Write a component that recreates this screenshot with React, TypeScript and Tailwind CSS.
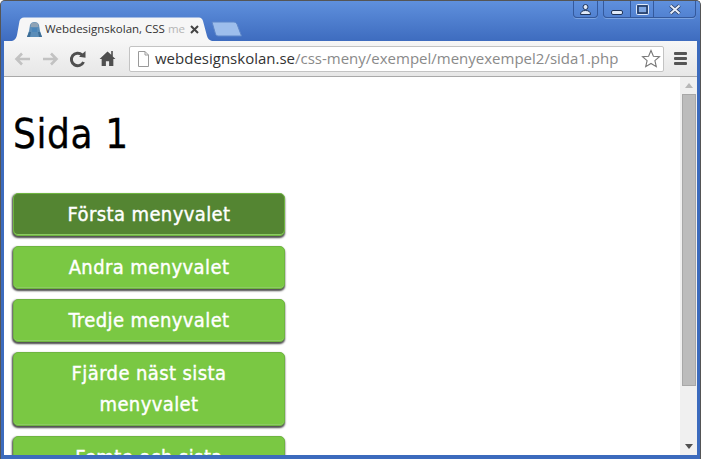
import React from 'react';

const items = ['Första menyvalet', 'Andra menyvalet', 'Tredje menyvalet', 'Fjärde näst sista menyvalet', 'Femte och sista menyvalet'];

const Favicon = () => (
  <svg width="17" height="17" viewBox="0 0 17 17" className="shrink-0">
    <path d="M1 16 L3 10 L4 4 Q5 1 8.500 1 Q12 1 13 4 L14 10 L16 16 Z" fill="#5b8db8" />
    <path d="M5 2.500 Q8.500 0.500 12 2.500 L12.500 6 H4.500 Z" fill="#8fa3b5" />
    <path d="M1 16 L3 11 H5 L4 16 Z M16 16 L14 11 H12 L13 16 Z" fill="#3c6d96" />
    <path d="M6 7 H11 V11 H6 Z" fill="#4a86ba" />
  </svg>
);

const NavIcons = () => (
  <div className="flex items-center w-[125px] pl-[8px] shrink-0">
    <svg width="20" height="20" viewBox="0 0 20 20">
      <path d="M18 10 H5 M10 4.500 L4.500 10 L10 15.500" fill="none" stroke="#c2c2c2" strokeWidth="2.600" />
    </svg>
    <svg width="20" height="20" viewBox="0 0 20 20" className="ml-[9px]">
      <path d="M2 10 H15 M10 4.500 L15.500 10 L10 15.500" fill="none" stroke="#c2c2c2" strokeWidth="2.600" />
    </svg>
    <svg width="18" height="18" viewBox="0 0 18 18" className="ml-[8px]">
      <path d="M14.500 12 A6.300 6.300 0 1 1 13 4.800" fill="none" stroke="#4f4f4f" strokeWidth="3" />
      <path d="M10 6.800 L16.500 7.800 L16.500 1 Z" fill="#4f4f4f" />
    </svg>
    <svg width="17" height="17" viewBox="0 0 16 16" className="ml-[12px]">
      <path d="M8 1.500 L0.500 8.500 H2.500 V15 H6.500 V10.500 H9.500 V15 H13.500 V8.500 H15.500 L13 6 V1 H11.500 V4.500 Z" fill="#4f4f4f" />
    </svg>
  </div>
);

export default function App() {
  return (
    <div className="w-[701px] h-[459px] overflow-hidden flex flex-col bg-[#3c6bbd] rounded-t-[5px] border-t border-x border-[#555] font-['Open_Sans',sans-serif]">
      {/* title bar */}
      <div className="h-[40px] shrink-0 flex justify-between bg-gradient-to-b from-[#5f90dd] to-[#3e6cbf] pl-[11px] pr-[4px]">
        <div className="flex items-end">
          <div className="relative w-[200px] h-[24px] flex items-center pl-[14px]">
            <svg width="200" height="24" viewBox="0 0 200 24" className="absolute inset-0">
              <path d="M0 24 Q4 23 5 18 L7.500 4 Q8.500 0.500 12 0.500 H187 Q190 0.500 191 4 L195 19 Q196 23 200 24 Z" fill="#f6f6f6" />
            </svg>
            <div className="relative flex items-center">
              <Favicon />
              <span className="ml-[2px] w-[137px] whitespace-nowrap text-[11.500px] text-[#333] leading-[16px] bg-clip-text">
                Webdesignskolan, CSS <span className="text-[#b5b5b5]">me</span>
              </span>
              <svg width="9" height="9" viewBox="0 0 9 9" className="ml-[8px]">
                <path d="M1 1 L8 8 M8 1 L1 8" stroke="#444" strokeWidth="2" />
              </svg>
            </div>
          </div>
          <svg width="32" height="16" viewBox="0 0 32 16" className="mb-[4px] ml-[-1px]">
            <path d="M1 1 H23 Q25 1 26 3 L30.500 15 H7 Q5 15 4.500 13 Z" fill="#9dbeec" stroke="#5d86c8" />
          </svg>
        </div>
        <div className="flex items-start gap-[5px]">
          <div className="w-[25px] h-[17px] rounded-b-[4px] border border-t-0 border-[#34599c] flex items-center justify-center shadow-[0_1px_0_#7ba3e0]">
            <svg width="13" height="11" viewBox="0 0 13 11">
              <circle cx="6.500" cy="3" r="2.500" fill="#dfe9f8" stroke="#1f3358" strokeWidth="1" />
              <path d="M1.500 10.500 Q1.500 6.500 6.500 6.500 Q11.500 6.500 11.500 10.500 Z" fill="#dfe9f8" stroke="#1f3358" strokeWidth="1" />
            </svg>
          </div>
          <div className="w-[93px] h-[17px] rounded-b-[4px] border border-t-0 border-[#34599c] flex shadow-[0_1px_0_#7ba3e0]">
            <div className="w-[27px] flex items-end justify-center pb-[2px] border-r border-[#34599c]">
              <div className="w-[12px] h-[5px] bg-[#dfe9f8] border border-[#1f3358] rounded-[2px]" />
            </div>
            <div className="w-[23px] flex items-center justify-center border-r border-[#34599c]">
              <svg width="13" height="11" viewBox="0 0 13 11">
                <rect x="0.500" y="0.500" width="12" height="10" rx="1" fill="none" stroke="#dfe9f8" />
                <rect x="2" y="2" width="9" height="7" fill="#7ea6e2" stroke="#1f3358" strokeWidth="1.500" />
              </svg>
            </div>
            <div className="flex-1 flex items-center justify-center">
              <svg width="14" height="11" viewBox="0 0 14 11">
                <path d="M2.500 1.500 L11.500 9.500 M11.500 1.500 L2.500 9.500" stroke="#26385c" strokeWidth="3.600" />
                <path d="M2.500 1.500 L11.500 9.500 M11.500 1.500 L2.500 9.500" stroke="#e6edf9" strokeWidth="2" />
              </svg>
            </div>
          </div>
        </div>
      </div>

      <div className="flex-1 min-h-0 flex flex-col mx-[3px] mb-[4px] bg-white">
        {/* toolbar */}
        <div className="h-[36px] shrink-0 flex items-center bg-gradient-to-b from-[#f6f6f6] to-[#e7e7e7] border-b border-[#a9a9a9]">
          <NavIcons />
          <div className="w-[535px] h-[26px] shrink-0 flex items-center bg-white border border-[#c3c3c3] rounded-[2px] pl-[7px] pr-[2px]">
            <svg width="13" height="16" viewBox="0 0 13 16" className="shrink-0">
              <path d="M1.500 0.500 H8 L11.500 4 V15.500 H1.500 Z M8 0.500 V4 H11.500" fill="#fff" stroke="#9a9a9a" />
            </svg>
            <span className="ml-[5px] flex-1 text-[15px] leading-none whitespace-nowrap text-[#8a8a8a]">
              <span className="text-[#333]">webdesignskolan.se</span>/css-meny/exempel/menyexempel2/sida1.php
            </span>
            <svg width="20" height="19" viewBox="0 0 20 19" className="shrink-0">
              <path d="M10 1.500 L12.400 7.200 L18.500 7.700 L13.900 11.700 L15.300 17.700 L10 14.500 L4.700 17.700 L6.100 11.700 L1.500 7.700 L7.600 7.200 Z" fill="#fff" stroke="#777" strokeWidth="1.100" />
            </svg>
          </div>
          <div className="flex-1 flex flex-col items-center gap-[2px]">
            <div className="w-[13px] h-[3px] bg-[#555] rounded-[1px]" />
            <div className="w-[13px] h-[3px] bg-[#555] rounded-[1px]" />
            <div className="w-[13px] h-[3px] bg-[#555] rounded-[1px]" />
          </div>
        </div>

        <div className="flex-1 min-h-0 flex">
          {/* page */}
          <div className="flex-1 overflow-hidden px-[9px] font-['DejaVu_Sans_Condensed','DejaVu_Sans',sans-serif] [font-stretch:condensed]">
            <h1 className="text-[40px] leading-[48px] text-black mt-[33px] mb-[35px] tracking-[0.6px] [-webkit-text-stroke:0.3px_black]">Sida 1</h1>
            <ul className="w-[272px] flex flex-col gap-[10px]">
              {items.map((item, i) => (
                <li
                  key={item}
                  className={`rounded-[5px] border border-[#6fb540] px-[10px] py-[5px] text-center text-[20px] leading-[31px] tracking-[0.4px] text-white [-webkit-text-stroke:0.4px_white] shadow-[inset_0_-1px_0_#8ccb63,-1px_1px_2px_#555,0_2px_2px_#555] ${i === 0 ? 'bg-[#548532]' : 'bg-[#7ac843]'}`}
                >
                  {item}
                </li>
              ))}
            </ul>
          </div>
          {/* scrollbar */}
          <div className="w-[17px] shrink-0 flex flex-col items-center bg-[#f0f0f0]">
            <div className="h-[17px] flex items-center justify-center">
              <div className="border-x-[4px] border-x-transparent border-b-[5px] border-b-[#b8b8b8]" />
            </div>
            <div className="w-[14px] h-[292px] bg-[#bcbcbc] border border-[#a8a8a8]" />
            <div className="flex-1 flex items-end pb-[6px]">
              <div className="border-x-[4px] border-x-transparent border-t-[5px] border-t-[#505050]" />
            </div>
          </div>
        </div>
      </div>
    </div>
  );
}
